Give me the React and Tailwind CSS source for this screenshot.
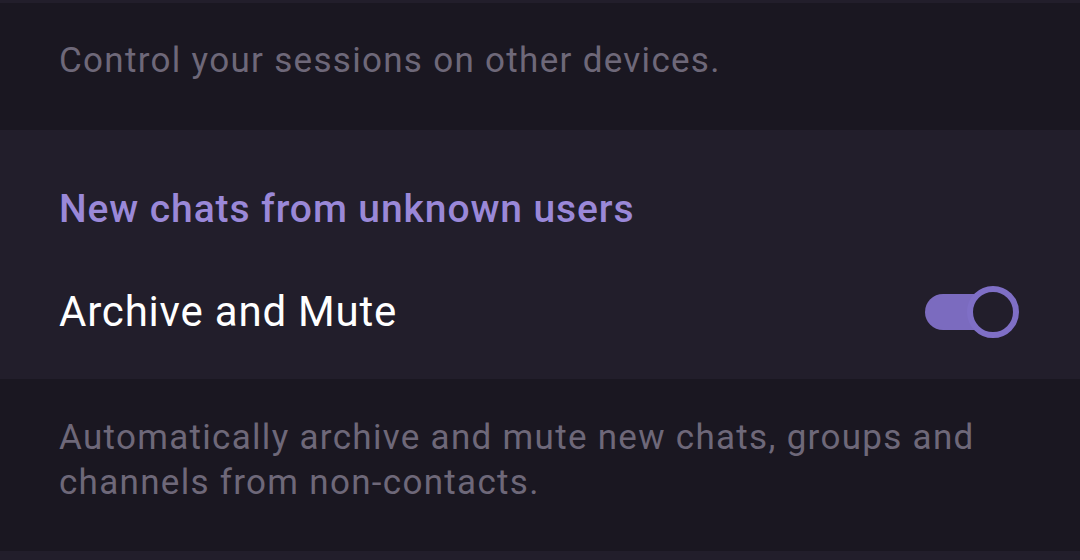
const Toggle = () => (
  <div className="relative w-[94px] h-[52px] shrink-0">
    <div className="absolute left-0 top-[8px] w-[70px] h-[36px] rounded-full bg-[#7b6bbf]" />
    <div className="absolute right-0 top-0 w-[52px] h-[52px] rounded-full border-[6px] border-[#7f6fc6] bg-[#221e2b]" />
  </div>
);

export default function App() {
  return (
    <div className="w-[1080px] h-[560px] overflow-hidden bg-[#1a1721] font-['Roboto',sans-serif]">
      <div className="h-[3px] bg-[#221e2b]" />

      {/* sessions hint */}
      <div className="h-[127px] pl-[59px] pt-[36px]">
        <p className="text-[35px] leading-[44px] tracking-[1.3px] text-[#6e6879]">
          Control your sessions on other devices.
        </p>
      </div>

      {/* new chats section */}
      <div className="h-[249px] bg-[#221e2b] pl-[59px] pr-[61px] pt-[57px]">
        <h2 className="text-[39px] leading-[44px] tracking-[0.9px] font-medium text-[#9a88d8]">
          New chats from unknown users
        </h2>
        <div className="mt-[57px] flex items-center justify-between h-[48px]">
          <span className="text-[42px] leading-[48px] tracking-[0.8px] text-white">Archive and Mute</span>
          <Toggle />
        </div>
      </div>

      {/* explanation */}
      <div className="h-[172px] pl-[59px] pr-[59px] pt-[36px]">
        <p className="text-[35px] leading-[45px] tracking-[1.3px] text-[#6e6879]">
          Automatically archive and mute new chats, groups and channels from non-contacts.
        </p>
      </div>

      <div className="h-[9px] bg-[#221e2b]" />
    </div>
  );
}
